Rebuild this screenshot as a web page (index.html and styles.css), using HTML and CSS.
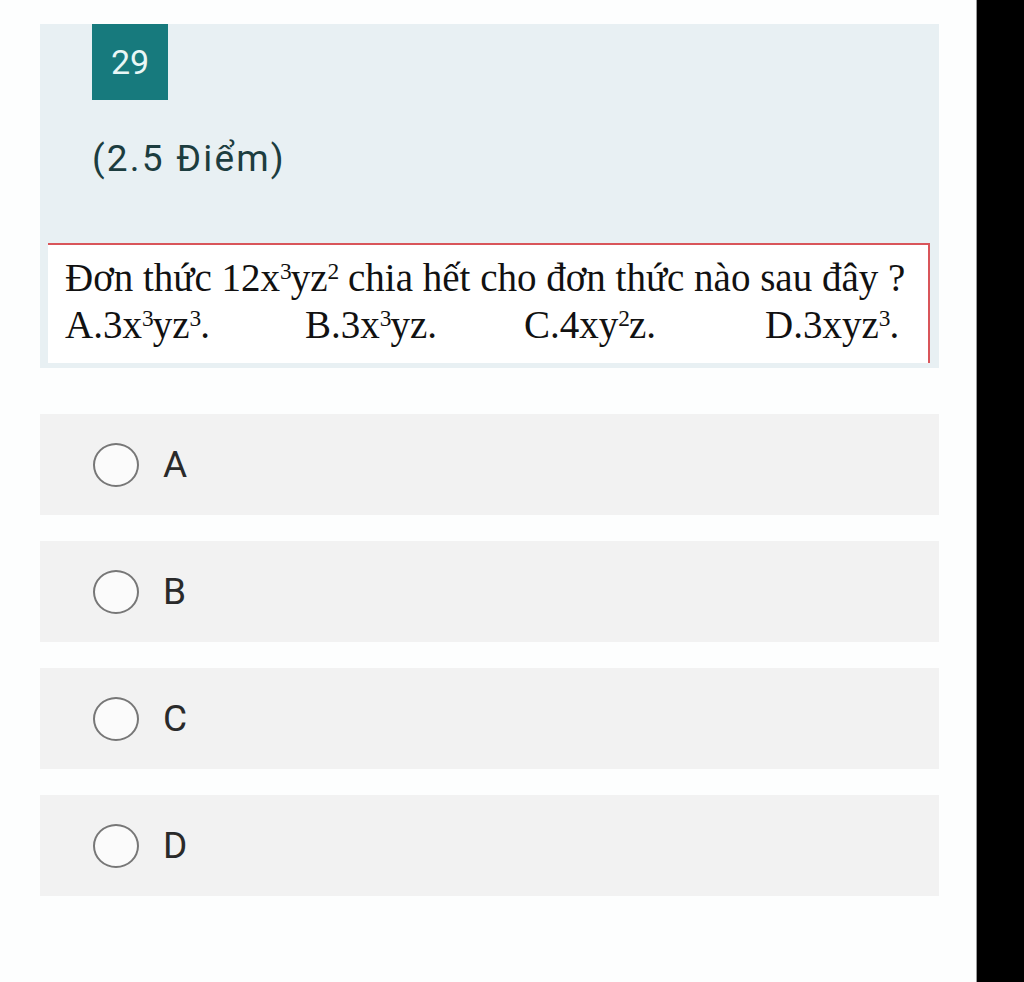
FILE: index.html
```html
<!DOCTYPE html>
<html lang="vi">
<head>
	<meta charset="UTF-8">
	<title>Câu 29</title>
	<link rel="stylesheet" href="styles.css">
</head>
<body>
	<div class="screen">
		<div class="page">
			<div class="question">
				<div class="num">29</div>
				<div class="point">(2.5 Điểm)</div>
				<div class="pic">
					<p class="line">Đơn thức 12x<sup>3</sup>yz<sup>2</sup> chia hết cho đơn thức nào sau đây ?</p>
					<p class="line opts">
						<span class="o1">A.3x<sup>3</sup>yz<sup>3</sup>.</span>
						<span class="o2">B.3x<sup>3</sup>yz.</span>
						<span class="o3">C.4xy<sup>2</sup>z.</span>
						<span class="o4">D.3xyz<sup>3</sup>.</span>
					</p>
				</div>
			</div>
			<ul class="choices">
				<li><i class="radio"></i><span>A</span></li>
				<li><i class="radio"></i><span>B</span></li>
				<li><i class="radio"></i><span>C</span></li>
				<li><i class="radio"></i><span>D</span></li>
			</ul>
		</div>
		<div class="side"></div>
	</div>
</body>
</html>
```

FILE: styles.css
```css
*{
	margin:0;
	padding:0;
}
html,body{
	width:100%;
	height:100%;
	background:#000;
}
.screen{
	display:flex;
	height:982px;
}
.page{
	width:977px;
	background:#fdfefe;
	border-right:1px solid #9a9a9a;
	padding:24px 0 0 40px;
	box-sizing:border-box;
}
.side{
	flex:1;
	background:#000;
}
.question{
	width:899px;
	height:344px;
	background:#e8f0f3;
}
.num{
	margin-left:52px;
	width:76px;
	height:76px;
	background:#177a7d;
	color:#e9f7f6;
	font-family:Roboto,"Noto Sans",sans-serif;
	font-size:34px;
	line-height:76px;
	padding-left:19px;
	box-sizing:border-box;
}
.point{
	margin:29px 0 0 52px;
	height:60px;
	font-family:Roboto,"Noto Sans",sans-serif;
	font-size:37px;
	letter-spacing:2.2px;
	line-height:60px;
	color:#1c3d3f;
}
.pic{
	margin:54px 0 0 8px;
	width:882px;
	height:120px;
	background:#fff;
	border-top:2px solid #d9555a;
	border-right:2px solid #d9555a;
	box-sizing:border-box;
	padding:9px 0 0 17px;
	font-family:"Liberation Serif","Times New Roman",serif;
	font-size:39px;
	color:#111;
}
.line{
	height:47px;
	line-height:47px;
	white-space:nowrap;
}
.line sup{
	font-size:0.6em;
	vertical-align:0.5em;
	line-height:0;
	margin-right:-1px;
}
.opts{
	display:flex;
}
.opts .o1{width:240px;}
.opts .o2{width:219px;}
.opts .o3{width:241px;}
.choices{
	list-style:none;
	margin-top:46px;
	width:899px;
	display:flex;
	flex-direction:column;
	gap:26px;
}
.choices li{
	height:101px;
	background:#f2f2f2;
	display:flex;
	align-items:center;
	padding-left:53px;
	gap:24px;
	font-family:Roboto,"Noto Sans",sans-serif;
	font-size:37px;
	color:#2a2a2a;
}
.radio{
	width:46px;
	height:44px;
	border:2.5px solid #777;
	border-radius:50%;
	background:#fbfbfb;
	box-sizing:border-box;
}
```
